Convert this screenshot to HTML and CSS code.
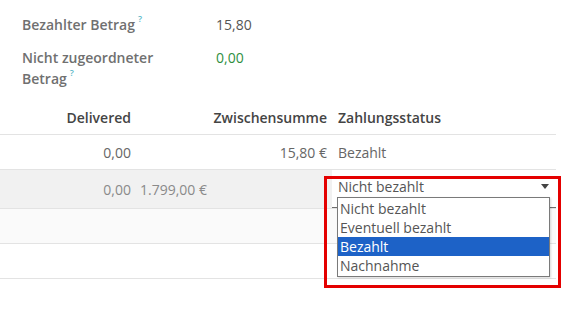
FILE: index.html
```html
<!DOCTYPE html>
<html lang="de">
<head>
<meta charset="utf-8">
<link rel="stylesheet" href="styles.css">
</head>
<body>
<div class="page">
  <div class="summary">
    <div class="label">Bezahlter Betrag<sup class="help">?</sup></div>
    <div class="value">15,80</div>
    <div class="label">Nicht zugeordneter<br>Betrag<sup class="help">?</sup></div>
    <div class="value ok">0,00</div>
  </div>

  <div class="table">
    <div class="row head">
      <div class="cell c1">Delivered</div>
      <div class="cell c2"></div>
      <div class="cell c3">Zwischensumme</div>
      <div class="cell c4">Zahlungsstatus</div>
    </div>
    <div class="row">
      <div class="cell c1">0,00</div>
      <div class="cell c2"></div>
      <div class="cell c3">15,80 €</div>
      <div class="cell c4">Bezahlt</div>
    </div>
    <div class="row edit">
      <div class="cell c1 muted">0,00</div>
      <div class="cell c2 muted">1.799,00 €</div>
      <div class="cell c3"></div>
      <div class="cell c4 select-cell">
        <div class="select">
          <span>Nicht bezahlt</span>
          <span class="caret"></span>
        </div>
        <ul class="options">
          <li>Nicht bezahlt</li>
          <li>Eventuell bezahlt</li>
          <li class="active">Bezahlt</li>
          <li>Nachnahme</li>
        </ul>
      </div>
    </div>
    <div class="row light">
      <div class="cell c1"></div><div class="cell c2"></div><div class="cell c3"></div><div class="cell c4"></div>
    </div>
    <div class="row">
      <div class="cell c1"></div><div class="cell c2"></div><div class="cell c3"></div><div class="cell c4"></div>
    </div>
  </div>
  <div class="highlight"></div>
</div>
</body>
</html>
```

FILE: styles.css
```css
* { box-sizing: border-box; }
html, body { margin: 0; padding: 0; background: #fff; }
body {
  font-family: "Open Sans", "DejaVu Sans", sans-serif;
  font-size: 14px;
  line-height: 21px;
  color: #666;
  width: 584px;
  height: 314px;
  overflow: hidden;
}
.page { position: relative; width: 584px; height: 314px; }

.summary {
  display: grid;
  grid-template-columns: 194px auto;
  row-gap: 12px;
  padding: 14px 0 0 22px;
}
.label { font-weight: 600; color: #707070; }
.value { color: #555; }
.value.ok { color: #2f8f3f; }
.help {
  color: #5cb8c8;
  font-size: 9px;
  font-weight: 600;
  line-height: 9px;
  vertical-align: top;
  margin-left: 3px;
}

.table { width: 556px; margin-top: 11px; }
.row {
  display: grid;
  grid-template-columns: 136px 76px 120px 224px;
  height: 35px;
  border-bottom: 1px solid #e3e3e3;
  align-items: center;
}
.row.head { height: 35px; font-weight: 600; color: #444; }
.row.edit { height: 39px; background: #f1f1f1; align-items: stretch; }
.row.light { background: #fafafa; }
.cell { white-space: nowrap; padding-right: 5px; text-align: right; }
.cell.c4 { text-align: left; padding: 0 0 0 6px; }
.row.edit .cell { display: flex; align-items: center; justify-content: flex-end; padding-top: 1px; }
.muted { color: #8a8a8a; }

.row.edit .select-cell {
  background: #fff;
  padding: 0;
  position: relative;
  display: block;
}
.select {
  display: flex;
  align-items: flex-start;
  justify-content: space-between;
  height: 38px;
  padding: 6px 6px 0 6px;
  border-bottom: 1px solid #6e6e6e;
  color: #555;
}
.caret {
  width: 0; height: 0;
  border-left: 4px solid transparent;
  border-right: 4px solid transparent;
  border-top: 5px solid #444;
  margin-top: 8px;
  margin-right: 1px;
}

.options {
  position: absolute;
  left: 5px;
  top: 27px;
  width: 213px;
  margin: 0;
  padding: 1px 0;
  list-style: none;
  background: #fff;
  border: 1px solid #7a7a7a;
  box-shadow: 1px 1px 2px rgba(0,0,0,0.15);
  color: #555;
  z-index: 2;
}
.options li {
  height: 19px;
  line-height: 19px;
  padding-left: 2px;
}
.options li.active { background: #1d62c7; color: #fff; }

.highlight {
  position: absolute;
  left: 324px;
  top: 176px;
  width: 237px;
  height: 112px;
  border: 3px solid #e40000;
  z-index: 3;
  pointer-events: none;
}
```
